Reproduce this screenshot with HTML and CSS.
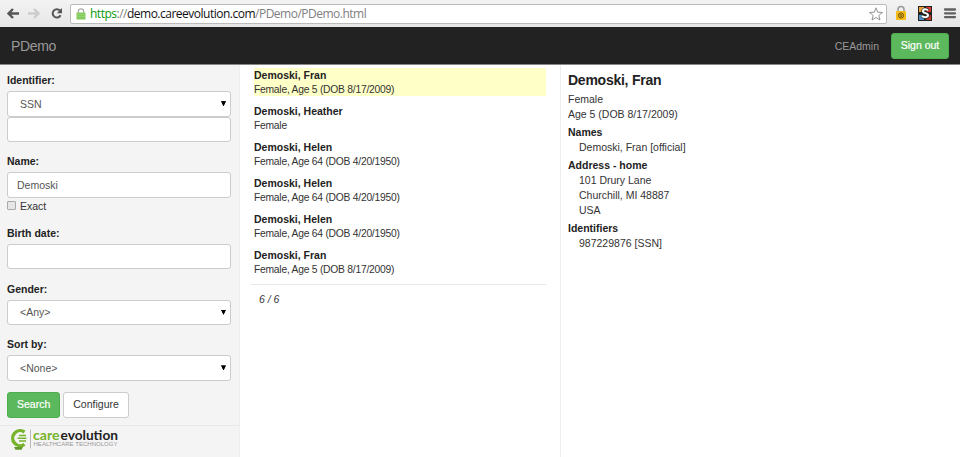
FILE: index.html
```html
<!DOCTYPE html>
<html lang="en">
<head>
<meta charset="utf-8">
<title>PDemo</title>
<link rel="stylesheet" href="styles.css">
</head>
<body>
<div class="browser">
  <svg class="nav-icons" width="70" height="27" viewBox="0 0 70 27" fill="none" stroke-width="2.4">
    <path d="M19 13.5H8.5M13 9l-4.5 4.5L13 18" stroke="#555"/>
    <path d="M28 13.5h10.500M34 9l4.500 4.500L34 18" stroke="#ccc"/>
    <path d="M60 10.500a4.200 4.200 0 1 0 .6 4.800" stroke="#555" stroke-width="2"/>
    <path d="M62 8v5.200h-5.200z" fill="#555"/>
  </svg>
  <div class="address">
    <svg class="lock" width="10" height="12" viewBox="0 0 10 12">
      <path d="M2.300 6V3.500a2.700 2.700 0 0 1 5.400 0V6" fill="none" stroke="#aaa" stroke-width="1.200"/>
      <rect x=".5" y="4.500" width="9" height="7" rx=".6" fill="#83cb5d"/>
      <path d="M1 6.500h8M1 8.500h8" stroke="#a0dc80" stroke-width=".6"/>
    </svg>
    <div class="url"><span class="scheme">https</span>://<span class="host">demo.careevolution.com</span>/PDemo/PDemo.html</div>
    <svg class="star" width="14" height="14" viewBox="0 0 14 14"><path d="M7 .8l1.700 4.400 4.700.3-3.600 3 1.200 4.500L7 10.500 3 13l1.200-4.500-3.600-3 4.700-.3z" fill="#fff" stroke="#888" stroke-width=".9"/></svg>
  </div>
  <svg class="ext" width="66" height="27" viewBox="0 0 66 27">
    <path d="M4 12V9.500a3 3 0 0 1 6 0V12" fill="none" stroke="#999" stroke-width="1.500"/>
    <rect x="2" y="11" width="10" height="9" rx="1" fill="#f5bd16"/>
    <circle cx="7" cy="15.500" r="2.600" fill="none" stroke="#5b4300" stroke-width=".9"/>
    <circle cx="7" cy="15.500" r="1" fill="none" stroke="#5b4300" stroke-width=".8"/>
    <rect x="24" y="6" width="14" height="15" fill="#222"/>
    <path d="M25 7h5v5h-5z" fill="#e8a33a"/><path d="M32 7h5v5h-5z" fill="#d9392f"/>
    <path d="M25 15h5v5h-5z" fill="#4b8cc4"/><path d="M32 15h5v5h-5z" fill="#c33a28"/>
    <path d="M34 10.500C32.500 8.500 28.500 9 29 11.500c.5 2.300 5 1 5 3.800 0 2.400-4.500 2.400-6 .5" fill="none" stroke="#222" stroke-width="3.400"/>
    <path d="M34 10.500C32.500 8.500 28.500 9 29 11.500c.5 2.300 5 1 5 3.800 0 2.400-4.500 2.400-6 .5" fill="none" stroke="#fff" stroke-width="2"/>
    <path d="M51 9.500h10M51 13.300h10M51 17.100h10" stroke="#606060" stroke-width="2.300" stroke-linecap="round"/>
  </svg>
</div>
<header class="navbar">
  <div class="brand">PDemo</div>
  <div class="user">CEAdmin</div>
  <button class="btn green signout">Sign out</button>
</header>
<main class="columns">
  <aside class="sidebar">
    <form class="form">
      <div class="group">
        <label>Identifier:</label>
        <div class="control select"><span>SSN</span><i class="caret"></i></div>
        <div class="control"></div>
      </div>
      <div class="group">
        <label>Name:</label>
        <div class="control">Demoski</div>
        <div class="check"><i class="box"></i>Exact</div>
      </div>
      <div class="group">
        <label>Birth date:</label>
        <div class="control"></div>
      </div>
      <div class="group">
        <label>Gender:</label>
        <div class="control select"><span>&lt;Any&gt;</span><i class="caret"></i></div>
      </div>
      <div class="group">
        <label>Sort by:</label>
        <div class="control select"><span>&lt;None&gt;</span><i class="caret"></i></div>
      </div>
      <div class="actions">
        <button type="button" class="btn green">Search</button>
        <button type="button" class="btn">Configure</button>
      </div>
    </form>
    <footer class="logo">
      <svg width="112" height="26" viewBox="0 -3 112 26">
        <path d="M16.500 3A7.500 7.500 0 1 0 16.500 15.300" fill="none" stroke="#78b32c" stroke-width="3.400"/>
        <path d="M11 6.500h7M9.500 9.200h9M11 11.900h7" stroke="#78b32c" stroke-width="1.500"/>
        <path d="M6 18h9l-1.500 2.700h-6z" fill="#65982a"/>
        <path d="M22.500.5v19" stroke="#aaa" stroke-width=".8"/>
        <text x="25" y="11.300" class="care" textLength="26.500" lengthAdjust="spacingAndGlyphs">care</text>
        <text x="52.500" y="11.300" class="evo" textLength="57.500" lengthAdjust="spacingAndGlyphs">evolution</text>
        <text x="25.500" y="17.300" class="tag" textLength="84" lengthAdjust="spacingAndGlyphs">HEALTHCARE TECHNOLOGY</text>
      </svg>
    </footer>
  </aside>
  <section class="results">
    <div class="person selected"><b>Demoski, Fran</b><span>Female, Age 5 (DOB 8/17/2009)</span></div>
    <div class="person"><b>Demoski, Heather</b><span>Female</span></div>
    <div class="person"><b>Demoski, Helen</b><span>Female, Age 64 (DOB 4/20/1950)</span></div>
    <div class="person"><b>Demoski, Helen</b><span>Female, Age 64 (DOB 4/20/1950)</span></div>
    <div class="person"><b>Demoski, Helen</b><span>Female, Age 64 (DOB 4/20/1950)</span></div>
    <div class="person"><b>Demoski, Fran</b><span>Female, Age 5 (DOB 8/17/2009)</span></div>
    <div class="count">6 / 6</div>
  </section>
  <section class="detail">
    <h1>Demoski, Fran</h1>
    <p>Female</p>
    <p>Age 5 (DOB 8/17/2009)</p>
    <h2>Names</h2>
    <p class="in">Demoski, Fran [official]</p>
    <h2>Address - home</h2>
    <p class="in">101 Drury Lane</p>
    <p class="in">Churchill, MI 48887</p>
    <p class="in">USA</p>
    <h2>Identifiers</h2>
    <p class="in">987229876 [SSN]</p>
  </section>
</main>
</body>
</html>
```
FILE: styles.css
```css
* { box-sizing: border-box; }
body { margin: 0; height: 457px; overflow: hidden; display: flex; flex-direction: column; background: #fff; color: #333; font: 10.5px/15px "Liberation Sans", Arial, sans-serif; }
.browser { height: 27px; flex: none; display: flex; align-items: center; background: linear-gradient(#f3f3f3, #e6e6e6); }
.nav-icons { flex: none; }
.address { flex: 1; height: 20px; display: flex; align-items: center; background: #fff; border: 1px solid #bbb; border-radius: 2px; padding: 0 3px 0 5px; }
.url { flex: 1; margin-left: 4px; font: 12px/18px "Open Sans", sans-serif; letter-spacing: -.5px; color: #808080; white-space: nowrap; }
.scheme { color: #0a9a0a; }
.host { color: #111; }
.ext { flex: none; margin-left: 7px; }
.navbar { height: 38px; flex: none; display: flex; align-items: center; background: #222; border-bottom: 1px solid #888; padding: 0 11px; color: #999; }
.brand { flex: 1; font-size: 14px; letter-spacing: -.35px; padding-top: 1px; }
.user { margin-right: 12px; padding-top: 1px; }
.btn { height: 26px; border: 1px solid #ccc; border-radius: 3px; background: #fff; color: #333; font: 10.5px/15px "Liberation Sans", Arial, sans-serif; padding: 0 9px; }
.btn.green { background: #5cb85c; border-color: #4cae4c; color: #fff; -webkit-text-stroke: .2px #fff; }
.signout { width: 58px; padding: 0; }
.columns { flex: 1; display: flex; min-height: 0; }
.sidebar { width: 240px; background: #f4f4f4; border-right: 1px solid #eee; display: flex; flex-direction: column; }
.form { height: 361px; flex: none; padding: 7px 8px 0 7px; border-bottom: 1px solid #e8e8e8; }
.group { margin-bottom: 11.100px; }
.group label { display: block; height: 19px; line-height: 16px; font-weight: bold; }
.control { height: 25.500px; background: #fff; border: 1px solid #ccc; border-radius: 3px; padding: 0 9px; line-height: 24px; color: #555; }
.select { display: flex; align-items: center; justify-content: space-between; padding: 0 4px 0 12px; }
.caret { border: 2.500px solid transparent; border-width: 5px 2.500px 0; border-top-color: #000; width: 5px; clip-path: polygon(0 0, 100% 0, 50% 100%); background: #000; height: 5px; }
.check { display: flex; align-items: center; height: 16.300px; padding-top: 2px; gap: 4px; }
.box { width: 9px; height: 9px; margin-top: -3px; border: 1px solid #aaa; border-radius: 1px; background: #e6e6e6; }
.actions { display: flex; gap: 3px; }
.logo { padding-left: 8px; }
.care, .evo { font: 13px Lato, sans-serif; font-weight: bold; }
.care { fill: #78b32c; }
.evo { fill: #222; }
.tag { font: 4.800px "Liberation Sans", sans-serif; fill: #999; }
.results { width: 321px; border-right: 1px solid #eee; padding: 3px 14px 0 11px; }
.person { height: 28px; margin: 0 0 8px 3px; line-height: 14px; }
.person b, .person span { display: block; }
.person span { font-size: 10.300px; letter-spacing: -.24px; line-height: 15px; }
.person b, .detail h1, .detail h2, label { color: #222; }
.person.selected { background: #ffffc8; }
.count { border-top: 1px solid #e8e8e8; padding: 7px 8px; font-style: italic; }
.detail { padding: 6px 7px; }
.detail h1 { margin: 0 0 2px; font-size: 14px; letter-spacing: -.25px; line-height: 19px; }
.detail h2 { margin: 3px 0 0; font-size: 10.500px; line-height: 15px; }
.detail p { margin: 0; }
.detail .in { padding-left: 11px; }
```
